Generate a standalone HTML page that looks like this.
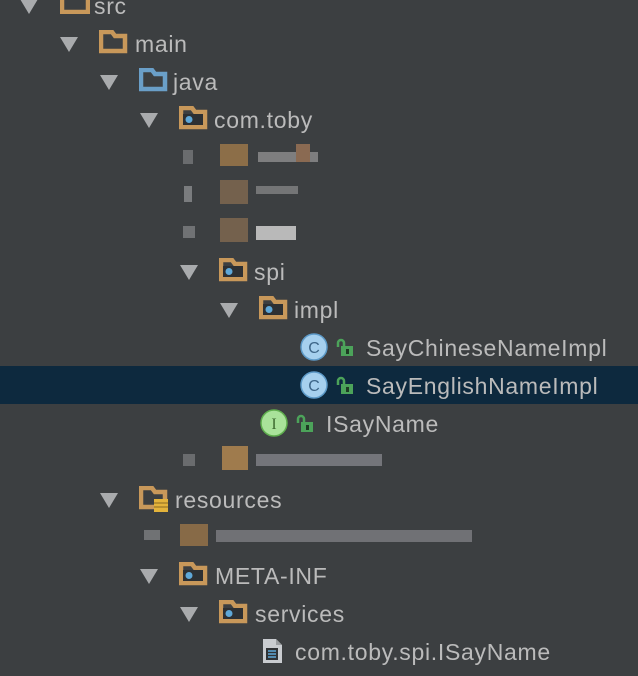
<!DOCTYPE html>
<html><head><meta charset="utf-8"><style>
body{margin:0;width:638px;height:676px;background:#3c3f41;overflow:hidden;position:relative;font-family:"Liberation Sans",sans-serif;}
.r{position:absolute;left:0;width:638px;height:38px;}
.t{position:absolute;font-size:23px;color:#bbbbbb;line-height:38px;top:1px;white-space:nowrap;letter-spacing:0.7px}
.a{position:absolute;top:13px;width:0;height:0;border-left:9px solid transparent;border-right:9px solid transparent;border-top:15px solid #a9abad;}
svg{position:absolute;}
.b{position:absolute;height:10px;}
</style></head><body>
<svg width="0" height="0" style="position:absolute">
<defs>
<g id="fo"><path d="M2 2h11l3 4h10v15H2z" fill="#3c3f41" stroke="#c8985a" stroke-width="4.5"/></g>
<g id="fp"><path d="M2 2h11l3 4h10v15H2z" fill="#3c3f41" stroke="#c8985a" stroke-width="4.5"/><rect x="4" y="8" width="20" height="11" fill="#2d3033"/><circle cx="10" cy="13.5" r="3.5" fill="#5fa8d8"/></g>
<g id="fj"><path d="M2 2h11l3 4h10v15H2z" fill="#3c3f41" stroke="#6a9fc8" stroke-width="4.5"/></g>
<g id="lk"><rect x="6" y="8" width="12" height="10" fill="#4ca35a"/><path d="M3 9V5a3 3 0 0 1 6 0v3" fill="none" stroke="#4ca35a" stroke-width="2.5"/><rect x="11" y="11" width="3" height="5" fill="#1f3b24"/></g>
</defs></svg>

<div class="r" style="top:-14px"><div class="a" style="left:20px"></div><svg style="left:60px;top:4px" width="30" height="24"><rect x="2" y="2" width="26" height="20" fill="none" stroke="#c8985a" stroke-width="4.5"/></svg><div class="t" style="left:94px">src</div></div>
<div class="r" style="top:24px"><div class="a" style="left:60px"></div><svg style="left:99px;top:6px" width="30" height="24"><use href="#fo"/></svg><div class="t" style="left:135px">main</div></div>
<div class="r" style="top:62px"><div class="a" style="left:100px"></div><svg style="left:139px;top:6px" width="30" height="24"><use href="#fj"/></svg><div class="t" style="left:173px">java</div></div>
<div class="r" style="top:100px"><div class="a" style="left:140px"></div><svg style="left:179px;top:6px" width="30" height="24"><use href="#fp"/></svg><div class="t" style="left:214px">com.toby</div></div>
<div class="r" style="top:138px"><div class="b" style="left:183px;top:12px;width:10px;height:14px;background:#6a6c6e"></div><div class="b" style="left:220px;top:6px;width:28px;height:22px;background:#a07a4a;opacity:.8"></div><div class="b" style="left:258px;top:14px;width:60px;height:10px;background:#9a9a9a;opacity:.7"></div><div class="b" style="left:296px;top:6px;width:14px;height:18px;background:#8a6a52"></div></div>
<div class="r" style="top:176px"><div class="b" style="left:184px;top:10px;width:8px;height:16px;background:#7a7c7e"></div><div class="b" style="left:220px;top:4px;width:28px;height:24px;background:#8c7052;opacity:.7"></div><div class="b" style="left:256px;top:10px;width:42px;height:8px;background:#9a9a9a;opacity:.6"></div></div>
<div class="r" style="top:214px"><div class="b" style="left:183px;top:12px;width:12px;height:12px;background:#707274"></div><div class="b" style="left:220px;top:4px;width:28px;height:24px;background:#8c7052;opacity:.7"></div><div class="b" style="left:256px;top:12px;width:40px;height:14px;background:#cfcfcf;opacity:.85"></div></div>
<div class="r" style="top:252px"><div class="a" style="left:180px"></div><svg style="left:219px;top:6px" width="30" height="24"><use href="#fp"/></svg><div class="t" style="left:254px">spi</div></div>
<div class="r" style="top:290px"><div class="a" style="left:220px"></div><svg style="left:259px;top:6px" width="30" height="24"><use href="#fp"/></svg><div class="t" style="left:294px">impl</div></div>
<div class="r" style="top:328px"><svg style="left:300px;top:5px" width="30" height="30"><circle cx="14" cy="14" r="13" fill="#a6d0ee" stroke="#5d9ac8" stroke-width="1.5"/><text x="14" y="20" font-family="Liberation Sans" font-size="16" fill="#3e6688" text-anchor="middle">C</text></svg><svg style="left:335px;top:10px" width="22" height="22"><use href="#lk"/></svg><div class="t" style="left:366px">SayChineseNameImpl</div></div>
<div class="r" style="top:366px;background:#0d293e"><svg style="left:300px;top:5px" width="30" height="30"><circle cx="14" cy="14" r="13" fill="#a6d0ee" stroke="#5d9ac8" stroke-width="1.5"/><text x="14" y="20" font-family="Liberation Sans" font-size="16" fill="#3e6688" text-anchor="middle">C</text></svg><svg style="left:335px;top:10px" width="22" height="22"><use href="#lk"/></svg><div class="t" style="left:366px">SayEnglishNameImpl</div></div>
<div class="r" style="top:404px"><svg style="left:260px;top:5px" width="30" height="30"><circle cx="14" cy="14" r="13" fill="#a9e29a" stroke="#5fae4e" stroke-width="1.5"/><text x="14" y="20" font-family="Liberation Serif" font-size="16" fill="#3c6a30" text-anchor="middle">I</text></svg><svg style="left:295px;top:10px" width="22" height="22"><use href="#lk"/></svg><div class="t" style="left:326px">ISayName</div></div>
<div class="r" style="top:442px"><div class="b" style="left:183px;top:12px;width:12px;height:12px;background:#6a6c6e"></div><div class="b" style="left:222px;top:4px;width:26px;height:24px;background:#b08650;opacity:.85"></div><div class="b" style="left:256px;top:12px;width:126px;height:12px;background:#9a9aa0;opacity:.6"></div></div>
<div class="r" style="top:480px"><div class="a" style="left:100px"></div><svg style="left:139px;top:6px" width="32" height="28"><path d="M2 2h11l3 4h10v15H2z" fill="#3c3f41" stroke="#c8985a" stroke-width="4.5"/><rect x="15" y="13" width="14" height="13" fill="#e3b33b"/><path d="M15 17h14M15 21h14" stroke="#8a6a20" stroke-width="1"/></svg><div class="t" style="left:175px">resources</div></div>
<div class="r" style="top:518px"><div class="b" style="left:144px;top:12px;width:16px;height:10px;background:#707274"></div><div class="b" style="left:180px;top:6px;width:28px;height:22px;background:#a07a4a;opacity:.75"></div><div class="b" style="left:216px;top:12px;width:256px;height:12px;background:#9a9aa0;opacity:.55"></div></div>
<div class="r" style="top:556px"><div class="a" style="left:140px"></div><svg style="left:179px;top:6px" width="30" height="24"><use href="#fp"/></svg><div class="t" style="left:215px">META-INF</div></div>
<div class="r" style="top:594px"><div class="a" style="left:180px"></div><svg style="left:219px;top:6px" width="30" height="24"><use href="#fp"/></svg><div class="t" style="left:255px">services</div></div>
<div class="r" style="top:632px"><svg style="left:262px;top:6px" width="22" height="26"><path d="M1 1h13l6 6v18H1z" fill="#c9ccd0"/><path d="M14 1v6h6" fill="#9a9da0"/><rect x="4" y="10" width="12" height="12" fill="#2f3235"/><path d="M6 13h8M6 16h8M6 19h8" stroke="#5fa8d8" stroke-width="1.5"/></svg><div class="t" style="left:295px">com.toby.spi.ISayName</div></div>
</body></html>
